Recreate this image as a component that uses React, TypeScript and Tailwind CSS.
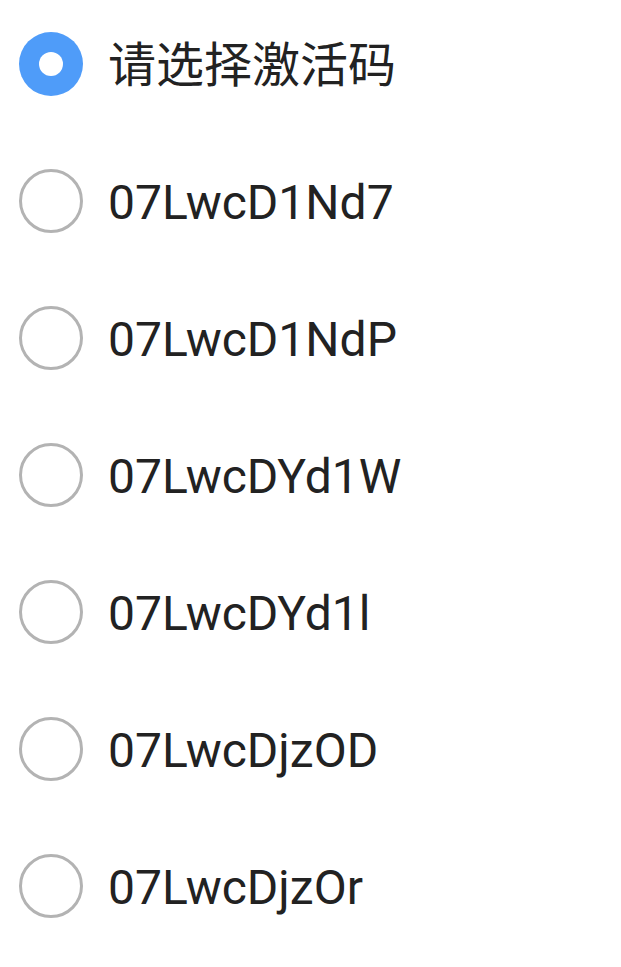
const options = [
  "请选择激活码",
  "07LwcD1Nd7",
  "07LwcD1NdP",
  "07LwcDYd1W",
  "07LwcDYd1l",
  "07LwcDjzOD",
  "07LwcDjzOr",
]

function Radio({ checked }: { checked: boolean }) {
  if (checked) {
    return (
      <span className="flex h-[64px] w-[64px] shrink-0 items-center justify-center rounded-full bg-[#4f9cf9]">
        <span className="h-[24px] w-[24px] rounded-full bg-white" />
      </span>
    )
  }
  return (
    <span className="h-[64px] w-[64px] shrink-0 rounded-full border-[3px] border-[#b3b3b3] bg-white" />
  )
}

export default function App() {
  return (
    <div className="min-h-[967px] w-full bg-white font-['Roboto','Noto_Sans_CJK_SC',sans-serif] text-[#222222]">
      <ul className="flex flex-col gap-[73px] pt-[32px] pl-[19px]">
        {options.map((code, i) => (
          <li key={code} className="flex h-[64px] items-center gap-[25px]">
            <Radio checked={i === 0} />
            <span className="pt-[4px] text-[48px] leading-none">{code}</span>
          </li>
        ))}
      </ul>
    </div>
  )
}
